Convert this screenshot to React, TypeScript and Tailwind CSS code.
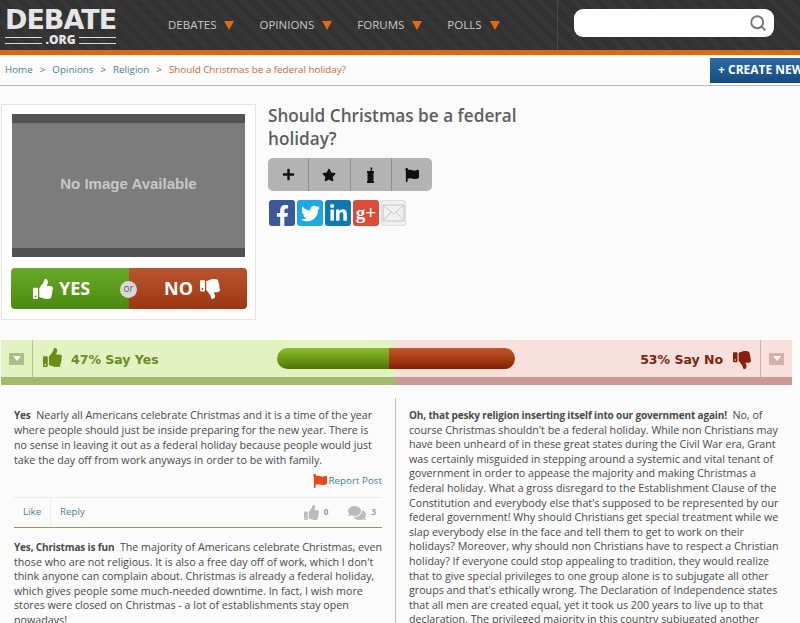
import React from 'react';
import { Search } from 'lucide-react';
import { FaThumbsUp, FaThumbsDown, FaStar, FaFlag, FaComments, FaFacebookF, FaTwitter, FaLinkedinIn, FaPlus } from 'react-icons/fa';

const openSans = { fontFamily: '"Open Sans", sans-serif' };

function NavItem({ label }: { label: string }) {
    return (
        <div className="flex items-center gap-[8px] text-[11.5px] text-[#c9c9c9]">
            <span>{label}</span>
            <span className="w-0 h-0 border-l-[5px] border-r-[5px] border-t-[9px] border-l-transparent border-r-transparent border-t-[#e2690f] mt-[1px]" />
        </div>
    );
}

function Podium() {
    return (
        <svg width="9" height="16" viewBox="0 0 9 16" fill="#111">
            <path d="M4.5 0l2 1-.8 3H4.6z" />
            <path d="M1 4h7v2H1z" />
            <path d="M1.5 6h6v8h-6z" />
            <path d="M1 14h7v2H1z" />
        </svg>
    );
}

function Collapse({ tone }: { tone: string }) {
    return (
        <div className={`w-[15px] h-[12px] flex items-center justify-center ${tone}`}>
            <span className="w-0 h-0 border-l-[4px] border-r-[4px] border-t-[5px] border-l-transparent border-r-transparent border-t-white" />
        </div>
    );
}

export default function App() {
    return (
        <div className="w-[800px] h-[623px] overflow-hidden bg-[#fbfbfb] text-[#444]" style={openSans}>
            {/* header */}
            <div className="h-[55px] bg-[repeating-linear-gradient(45deg,#2d2d2d_0,#2d2d2d_1px,#3b3b3b_1px,#3b3b3b_2px)] border-b-[5px] border-[#dd6a10] flex">
                <div className="w-[144px] pl-[5px] pt-[4px] flex flex-col shrink-0">
                    <div className="w-[111px] text-[27px] leading-[31px] font-black tracking-[-1px] text-[#e6e6e6] text-center" style={{ fontFamily: '"DejaVu Sans", sans-serif' }}>DEBATE</div>
                    <div className="w-[111px] flex items-center gap-[3px] mt-[-1px]">
                        <div className="flex-1 h-[7px] border-y border-[#ddd]" />
                        <span className="text-[12px] leading-[12px] font-extrabold text-[#e6e6e6]">.ORG</span>
                        <div className="flex-1 h-[7px] border-y border-[#ddd]" />
                    </div>
                </div>
                <div className="flex items-center gap-[25px] pl-[24px] w-[414px] shrink-0 border-r border-[#474747]">
                    <NavItem label="DEBATES" />
                    <NavItem label="OPINIONS" />
                    <NavItem label="FORUMS" />
                    <NavItem label="POLLS" />
                </div>
                <div className="flex-1 pl-[16px] pt-[9px]">
                    <div className="w-[200px] h-[28px] bg-white rounded-[9px] flex items-center justify-end pr-[7px]">
                        <Search size={18} strokeWidth={2.5} className="text-[#777]" />
                    </div>
                </div>
            </div>

            {/* breadcrumb */}
            <div className="h-[31px] border-b border-[#bbb] flex items-start justify-between">
                <div className="flex items-center gap-[7px] pl-[5px] pt-[1px] h-[30px] text-[9.8px] text-[#4d7d8e]">
                    <span>Home</span>
                    <span className="text-[#666]">&gt;</span>
                    <span>Opinions</span>
                    <span className="text-[#666]">&gt;</span>
                    <span>Religion</span>
                    <span className="text-[#666]">&gt;</span>
                    <span className="text-[#c8693a]">Should Christmas be a federal holiday?</span>
                </div>
                <div className="w-[90px] h-[25px] mt-[3px] pl-[8px] bg-gradient-to-b from-[#2a6ca6] to-[#174a7e] text-white text-[12px] leading-[24px] font-bold whitespace-nowrap overflow-hidden">+ CREATE NEW</div>
            </div>

            {/* debate summary */}
            <div className="flex pl-[1px] pt-[18px]">
                <div className="w-[255px] h-[216px] bg-white border border-[#e4e4e4] px-[10px] pt-[9px] shrink-0">
                    <div className="w-[233px] h-[143px] pb-[3px] bg-[#7c7c7c] border-y-[9px] border-[#525252] flex items-center justify-center text-[#c8c8c8] text-[15px] font-bold" style={{ fontFamily: '"Liberation Sans", sans-serif' }}>
                        No Image Available
                    </div>
                    <div className="relative w-[236px] h-[41px] mt-[11px] -ml-[1px] rounded-[4px] overflow-hidden flex text-white text-[18px] font-bold">
                        <div className="w-[118px] bg-gradient-to-b from-[#69a928] to-[#4c8a0c] flex items-center pl-[22px] gap-[6px]">
                            <FaThumbsUp size={20} />
                            <span>YES</span>
                        </div>
                        <div className="flex-1 bg-gradient-to-b from-[#b9552e] to-[#9b3712] flex items-center pl-[35px] gap-[7px]">
                            <span>NO</span>
                            <FaThumbsDown size={20} />
                        </div>
                        <div className="absolute left-[109px] top-[13px] w-[17px] h-[17px] rounded-full bg-[#d8d8d8] text-[#666] text-[10px] leading-[15px] font-normal text-center">or</div>
                    </div>
                </div>
                <div className="pl-[12px]">
                    <h1 className="w-[270px] text-[17.2px] leading-[23px] font-semibold text-[#5e5e5e]">Should Christmas be a federal holiday?</h1>
                    <div className="w-[164px] h-[33px] mt-[8px] rounded-[5px] bg-[#b3b3b3] flex">
                        <div className="flex-1 flex items-center justify-center border-r border-[#8f8f8f]"><FaPlus size={13} className="text-[#111]" /></div>
                        <div className="flex-1 flex items-center justify-center border-r border-[#8f8f8f]"><FaStar size={14} className="text-[#111]" /></div>
                        <div className="flex-1 flex items-center justify-center border-r border-[#8f8f8f]"><Podium /></div>
                        <div className="flex-1 flex items-center justify-center"><FaFlag size={14} className="text-[#111]" /></div>
                    </div>
                    <div className="flex gap-[2px] mt-[9px] pl-[1px]">
                        <div className="w-[26px] h-[26px] rounded-[3px] bg-[#3b5998] flex items-end justify-center text-white"><FaFacebookF size={21} /></div>
                        <div className="w-[26px] h-[26px] rounded-[3px] bg-[#1ea8e4] flex items-center justify-center text-white"><FaTwitter size={19} /></div>
                        <div className="w-[26px] h-[26px] rounded-[3px] bg-[#1078b0] flex items-center justify-center text-white"><FaLinkedinIn size={19} /></div>
                        <div className="w-[26px] h-[26px] rounded-[3px] bg-[#dc4a38] flex items-center justify-center text-white text-[19px] leading-[22px] font-bold" style={{ fontFamily: '"Liberation Serif", serif' }}>g+</div>
                        <div className="w-[25px] h-[26px] rounded-[3px] border border-[#ddd] bg-[#f1f1f1] flex items-center justify-center">
                            <svg width="23" height="18" viewBox="0 0 23 18" fill="none" stroke="#c4c4c4"><path d="M1 1h21v16H1zM1 1l10.5 9L22 1M1 17l8-9M22 17l-8-9" /></svg>
                        </div>
                    </div>
                </div>
            </div>

            {/* vote bar */}
            <div className="w-[791px] ml-[1px] mt-[20px] flex relative" style={{ fontFamily: '"DejaVu Sans", sans-serif' }}>
                <div className="w-[394px] h-[45px] bg-[#e2f2c0] border-b-[8px] border-[#a3b96f] flex items-center shrink-0">
                    <div className="w-[32px] h-full border-r border-[#b5c88a] flex items-center justify-center">
                        <Collapse tone="bg-[#aebf85]" />
                    </div>
                    <FaThumbsUp size={19} className="ml-[10px] text-[#6b8c1a] mb-[2px]" />
                    <span className="ml-[9px] mt-[3px] text-[12.5px] font-bold text-[#6b8c1a]">47% Say Yes</span>
                </div>
                <div className="flex-1 h-[45px] bg-[#f8e0dc] border-b-[8px] border-[#c79a94] flex items-center justify-end">
                    <span className="mt-[3px] text-[12.5px] font-bold text-[#7a2410]">53% Say No</span>
                    <FaThumbsDown size={18} className="ml-[10px] mr-[9px] mt-[3px] text-[#8a1f0b]" />
                    <div className="w-[32px] h-full border-l border-[#d3b0aa] flex items-center justify-center">
                        <Collapse tone="bg-[#d6aeaa]" />
                    </div>
                </div>
                <div className="absolute left-[276px] top-[8px] w-[238px] h-[21px] rounded-full overflow-hidden flex">
                    <div className="w-[112px] bg-gradient-to-b from-[#8dbb2e] via-[#6e9c14] to-[#4f7208]" />
                    <div className="flex-1 bg-gradient-to-b from-[#c0562a] via-[#a83d14] to-[#7f1f04]" />
                </div>
            </div>

            {/* arguments */}
            <div className="flex text-[10.7px] leading-[14.6px] text-[#4a4a4a]">
                <div className="w-[395px] pl-[14px] pr-[13px] pt-[23px] shrink-0">
                    <p className="w-[362px] leading-[15px]"><b className="font-bold text-[10px] tracking-[-0.15px]">Yes</b>&nbsp; Nearly all Americans celebrate Christmas and it is a time of the year where people should just be inside preparing for the new year. There is no sense in leaving it out as a federal holiday because people would just take the day off from work anyways in order to be with family.</p>
                    <div className="flex items-center justify-end gap-[2px] mt-[5px] text-[9.8px] leading-[16px] text-[#4d7d8e]">
                        <FaFlag size={14} className="text-[#e24a1c]" />
                        <span>Report Post</span>
                    </div>
                    <div className="h-[31px] mt-[8px] border-t border-b border-t-[#eaeaea] border-b-[#8ba24c] flex items-center text-[9.8px] text-[#4d7d8e]">
                        <span className="w-[37px] h-full pl-[9px] border-r border-[#eee] flex items-center">Like</span>
                        <span className="pl-[9px]">Reply</span>
                        <div className="ml-auto flex items-center text-[#999] text-[8px] font-bold">
                            <FaThumbsUp size={15} className="text-[#bbb]" />
                            <span className="ml-[5px]">0</span>
                            <FaComments size={18} className="ml-[20px] text-[#bbb]" />
                            <span className="ml-[5px] mr-[6px]">3</span>
                        </div>
                    </div>
                    <p className="w-[369px] mt-[12px]"><b className="font-bold text-[10px] tracking-[-0.15px]">Yes, Christmas is fun</b>&nbsp; The majority of Americans celebrate Christmas, even those who are not religious. It is also a free day off of work, which I don't think anyone can complain about. Christmas is already a federal holiday, which gives people some much-needed downtime. In fact, I wish more stores were closed on Christmas - a lot of establishments stay open nowadays!</p>
                </div>
                <div className="flex-1 border-l border-[#bbb] mt-[13px] pl-[13px] pt-[10px]">
                    <p className="w-[380px]"><b className="font-bold text-[10px] tracking-[-0.15px]">Oh, that pesky religion inserting itself into our government again!</b>&nbsp; No, of course Christmas shouldn't be a federal holiday. While non Christians may have been unheard of in these great states during the Civil War era, Grant was certainly misguided in stepping around a systemic and vital tenant of government in order to appease the majority and making Christmas a federal holiday. What a gross disregard to the Establishment Clause of the Constitution and everybody else that's supposed to be represented by our federal government! Why should Christians get special treatment while we slap everybody else in the face and tell them to get to work on their holidays? Moreover, why should non Christians have to respect a Christian holiday? If everyone could stop appealing to tradition, they would realize that to give special privileges to one group alone is to subjugate all other groups and that's ethically wrong. The Declaration of Independence states that all men are created equal, yet it took us 200 years to live up to that declaration. The privileged majority in this country subjugated another</p>
                </div>
            </div>
        </div>
    );
}
